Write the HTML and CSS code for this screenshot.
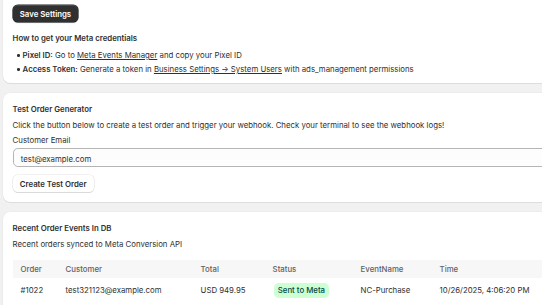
FILE: index.html
```html
<!DOCTYPE html>
<html>
<head>
<meta charset="utf-8">
<link rel="stylesheet" href="styles.css">
</head>
<body>
<div class="page">
  <section class="card card-settings">
    <button class="btn btn-primary">Save Settings</button>
    <h3 class="subhead">How to get your Meta credentials</h3>
    <ul class="steps">
      <li><b>Pixel ID:</b> Go to <a href="#">Meta Events Manager</a> and copy your Pixel ID</li>
      <li><b>Access Token:</b> Generate a token in <a href="#">Business Settings → System Users</a> with ads_management permissions</li>
    </ul>
  </section>

  <section class="card">
    <h2 class="title">Test Order Generator</h2>
    <p class="text">Click the button below to create a test order and trigger your webhook. Check your terminal to see the webhook logs!</p>
    <label class="label">Customer Email</label>
    <div class="input">test@example.com</div>
    <button class="btn btn-secondary">Create Test Order</button>
  </section>

  <section class="card">
    <h2 class="title">Recent Order Events In DB</h2>
    <p class="text">Recent orders synced to Meta Conversion API</p>
    <table class="table">
      <colgroup>
        <col class="c1"><col class="c2"><col class="c3"><col class="c4"><col class="c5"><col class="c6">
      </colgroup>
      <thead>
        <tr><th>Order</th><th>Customer</th><th>Total</th><th>Status</th><th>EventName</th><th>Time</th></tr>
      </thead>
      <tbody>
        <tr><td>#1022</td><td>test321123@example.com</td><td>USD 949.95</td><td><span class="badge">Sent to Meta</span></td><td>NC-Purchase</td><td>10/26/2025, 4:06:20 PM</td></tr>
      </tbody>
    </table>
  </section>
</div>
</body>
</html>
```

FILE: styles.css
```css
html, body {
  margin: 0;
  padding: 0;
  overflow: hidden;
  background: #f1f1f1;
}
body {
  font-family: Inter, "Noto Sans", sans-serif;
  font-size: 7.8px;
  line-height: 12px;
  color: #303030;
}
.page {
  width: 600px;
  margin-top: -4.6px;
  padding-left: 3px;
  display: flex;
  flex-direction: column;
  gap: 10px;
}
.card {
  background: #fff;
  border-radius: 7.2px;
  box-shadow: 0 1px 0 rgba(26,26,26,0.07), 0 0 0 0.6px rgba(0,0,0,0.04);
  padding: 9.6px;
  display: flex;
  flex-direction: column;
  align-items: flex-start;
}
.card-settings { padding-bottom: 8px; }
.btn {
  font-family: inherit;
  font-size: 7.8px;
  font-weight: 600;
  line-height: 12px;
  border-radius: 4.8px;
  padding: 2.4px 7.2px;
  height: 17px;
  cursor: pointer;
}
.btn-primary {
  background: #303030;
  color: #fff;
  border: 0;
  box-shadow: 0 0 0 0.6px #1a1a1a, inset 0 0.6px 0 rgba(255,255,255,0.25), 0 1px 1px rgba(0,0,0,0.3);
}
.btn-secondary {
  background: #fff;
  color: #303030;
  border: 0;
  margin-top: 8px;
  box-shadow: 0 0 0 0.6px #e3e3e3, 0 1px 0.6px rgba(0,0,0,0.18);
}
.subhead {
  margin: 10px 0 0;
  font-size: 7.8px;
  font-weight: 600;
  line-height: 12px;
}
.steps {
  margin: 5px 0 0;
  padding-left: 10px;
  list-style: none;
  display: flex;
  flex-direction: column;
  gap: 2px;
}
.steps li {
  line-height: 12px;
  position: relative;
}
.steps li::before {
  content: "";
  position: absolute;
  left: -5.6px;
  top: 5px;
  width: 2.6px;
  height: 2.6px;
  border-radius: 50%;
  background: #303030;
}
.steps b { font-weight: 600; }
.steps a { color: #303030; text-decoration: underline; text-underline-offset: 1px; }
.title {
  margin: 0;
  font-size: 7.8px;
  font-weight: 600;
  line-height: 12px;
}
.text {
  margin: 4.8px 0 0;
}
.label {
  margin-top: 2.4px;
  display: block;
}
.input {
  margin-top: 2.4px;
  align-self: stretch;
  height: 19.2px;
  box-sizing: border-box;
  border: 0.6px solid #b5b5b5;
  border-radius: 4.8px;
  background: #fdfdfd;
  padding: 3.6px 7.2px;
  line-height: 12px;
}
.table {
  margin-top: 9.6px;
  border-collapse: collapse;
  width: 100%;
  table-layout: fixed;
}
.c1 { width: 45px; }
.c2 { width: 135px; }
.c3 { width: 72px; }
.c4 { width: 88px; }
.c5 { width: 79px; }
.table th {
  background: #f7f7f7;
  color: #616161;
  font-weight: 500;
  text-align: left;
  padding: 2.8px 8px;
  height: 12px;
  line-height: 12px;
}
.table td {
  text-align: left;
  padding: 5px 8px;
  line-height: 12px;
  white-space: nowrap;
}
.table td:nth-child(4) { padding-left: 9px; }
.badge {
  display: inline-block;
  background: #cdfed4;
  color: #014b40;
  font-weight: 500;
  border-radius: 4.8px;
  padding: 1.5px 4.2px;
  line-height: 12px;
}
```
